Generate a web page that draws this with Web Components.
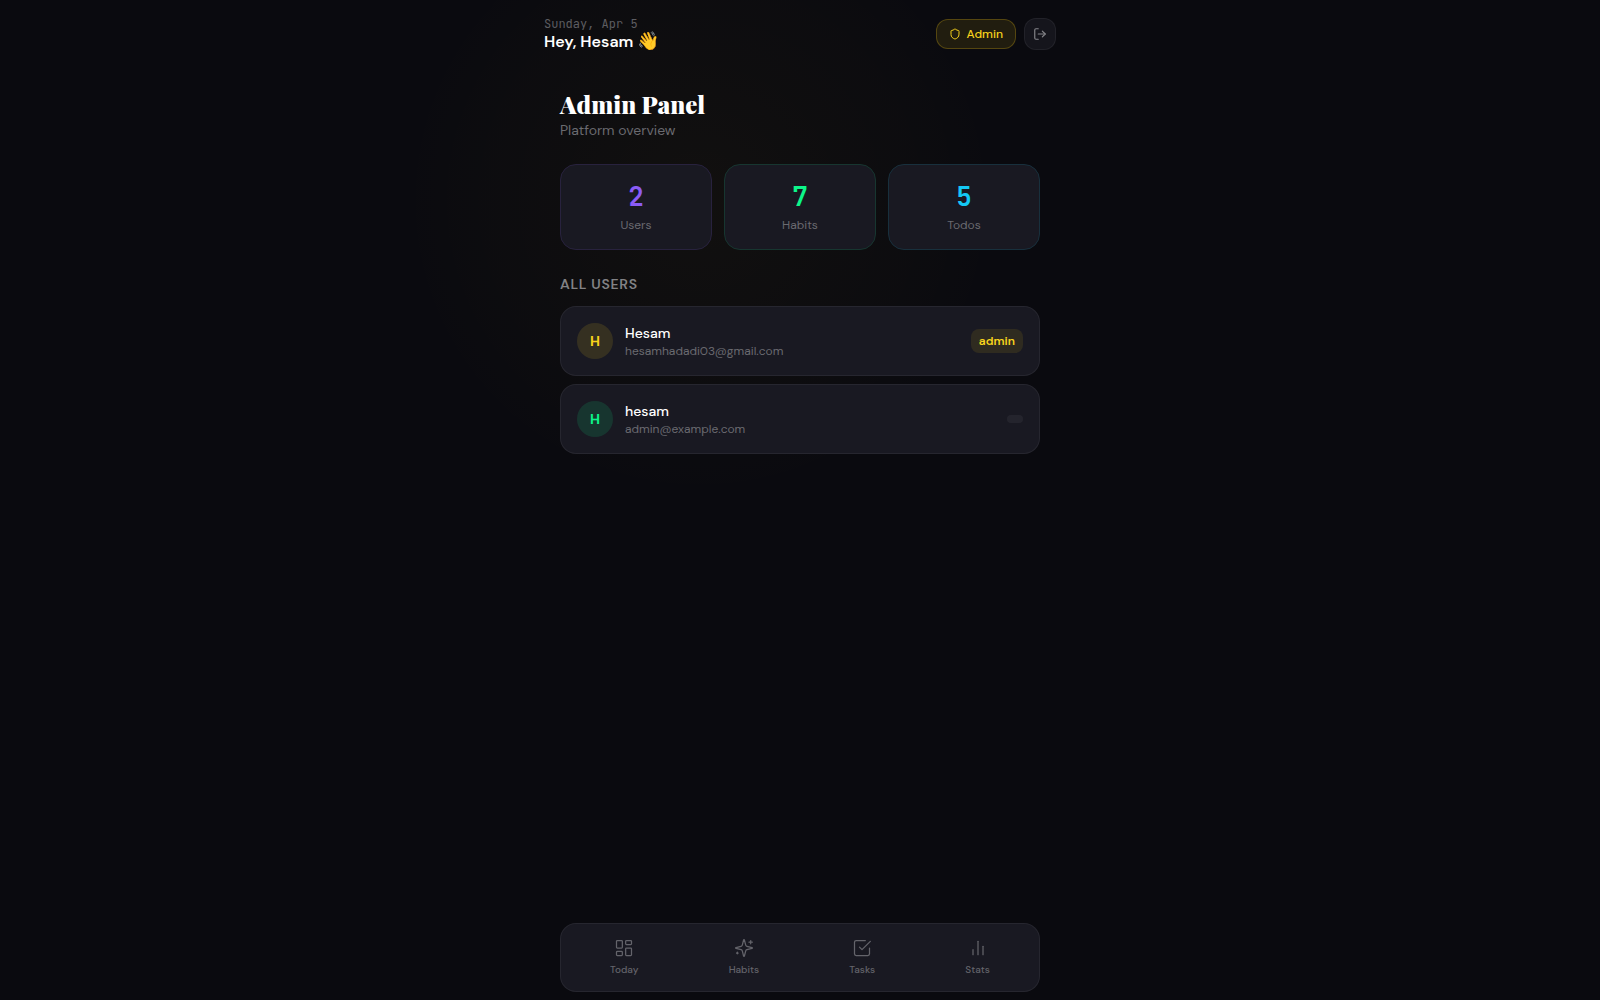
<!DOCTYPE html>
<html lang="en">
<head>
<meta charset="utf-8">
<meta name="viewport" content="width=device-width, initial-scale=1">
<title>Admin Panel</title>
<style>
  :root {
    --bg: #0a0a0f;
    --card: #191922;
    --line: rgba(255, 255, 255, 0.06);
    --text: #ffffff;
    --muted: #6a6a70;
    --gold: #f8d31c;
    --green: #0df68a;
    --purple: #8b5cf6;
    --cyan: #14c8f5;
    --sans: "DM Sans", Inter, "Open Sans", sans-serif;
    --mono: "JetBrains Mono", "DejaVu Sans Mono", monospace;
    --serif: "Playfair Display", "Liberation Serif", serif;
  }
  body {
    margin: 0;
    background: var(--bg);
    color: var(--text);
    font-family: var(--sans);
  }
</style>
</head>
<body>
<habit-app>
  <app-header slot="header" date="Sunday, Apr 5" name="Hesam"></app-header>

  <page-title heading="Admin Panel">Platform overview</page-title>

  <stat-grid>
    <stat-card value="2" tone="purple">Users</stat-card>
    <stat-card value="7" tone="green">Habits</stat-card>
    <stat-card value="5" tone="cyan">Todos</stat-card>
  </stat-grid>

  <user-list heading="All users">
    <user-card name="Hesam" email="hesamhadadi03@gmail.com" role="listitem" admin></user-card>
    <user-card name="hesam" email="admin@example.com" role="listitem"></user-card>
  </user-list>

  <tab-bar slot="footer">
    <tab-item icon="today">Today</tab-item>
    <tab-item icon="habits">Habits</tab-item>
    <tab-item icon="tasks">Tasks</tab-item>
    <tab-item icon="stats">Stats</tab-item>
  </tab-bar>
</habit-app>

<script>
const ICONS = {
  shield: '<path d="M20 13c0 5-3.5 7.5-7.66 8.95a1 1 0 0 1-.67-.01C7.5 20.5 4 18 4 13V6a1 1 0 0 1 1-1c2 0 4.5-1.2 6.24-2.72a1.17 1.17 0 0 1 1.52 0C14.51 3.81 17 5 19 5a1 1 0 0 1 1 1z"/>',
  logout: '<path d="M9 21H5a2 2 0 0 1-2-2V5a2 2 0 0 1 2-2h4"/><path d="m16 17 5-5-5-5"/><path d="M21 12H9"/>',
  today: '<rect x="3" y="3" width="7" height="9" rx="1"/><rect x="14" y="3" width="7" height="5" rx="1"/><rect x="14" y="12" width="7" height="9" rx="1"/><rect x="3" y="16" width="7" height="5" rx="1"/>',
  habits: '<path d="M9.937 15.5A2 2 0 0 0 8.5 14.063l-6.135-1.582a.5.5 0 0 1 0-.962L8.5 9.936A2 2 0 0 0 9.937 8.5l1.582-6.135a.5.5 0 0 1 .963 0L14.063 8.5A2 2 0 0 0 15.5 9.937l6.135 1.581a.5.5 0 0 1 0 .964L15.5 14.063a2 2 0 0 0-1.437 1.437l-1.582 6.135a.5.5 0 0 1-.963 0z"/><path d="M20 3v4"/><path d="M22 5h-4"/><path d="M4 17v2"/><path d="M5 18H3"/>',
  tasks: '<path d="m9 11 3 3L22 4"/><path d="M21 12v7a2 2 0 0 1-2 2H5a2 2 0 0 1-2-2V5a2 2 0 0 1 2-2h11"/>',
  stats: '<path d="M18 20V10"/><path d="M12 20V4"/><path d="M6 20v-6"/>',
};

function icon(name, size, stroke = 2) {
  return `<svg width="${size}" height="${size}" viewBox="0 0 24 24" fill="none" stroke="currentColor"
    stroke-width="${stroke}" stroke-linecap="round" stroke-linejoin="round" aria-hidden="true">${ICONS[name]}</svg>`;
}

// Shared base: puts css() and html() into an open shadow root
class BaseElement extends HTMLElement {
  connectedCallback() {
    if (this.shadowRoot) return;
    this.attachShadow({ mode: 'open' });
    this.shadowRoot.innerHTML = `<style>* { box-sizing: border-box; } ${this.css()}</style>${this.html()}`;
  }
}

class HabitApp extends BaseElement {
  css() {
    return `
      :host {
        display: flex;
        flex-direction: column;
        min-height: 100vh;
        position: relative;
        isolation: isolate;
        overflow: hidden;
      }
      .glow {
        position: absolute;
        z-index: -1;
        top: -100px;
        left: 25%;
        width: 600px;
        height: 600px;
        border-radius: 50%;
        background: radial-gradient(closest-side, rgba(250, 204, 21, 0.03), rgba(250, 204, 21, 0.02) 40%, rgba(250, 204, 21, 0.01) 70%, transparent);
      }
      main, .top, .bottom {
        width: 100%;
        max-width: 512px;
        margin: 0 auto;
      }
      main {
        flex: 1;
        display: flex;
        flex-direction: column;
        gap: 24px;
        padding: 20px 16px;
        box-sizing: border-box;
      }
      .bottom { padding: 0 16px 8px; }
    `;
  }

  html() {
    return `
      <div class="glow"></div>
      <div class="top"><slot name="header"></slot></div>
      <main><slot></slot></main>
      <div class="bottom"><slot name="footer"></slot></div>
    `;
  }
}
customElements.define('habit-app', HabitApp);

class AppHeader extends BaseElement {
  css() {
    return `
      :host { display: block; }
      header {
        display: flex;
        align-items: center;
        justify-content: space-between;
        padding: 16px 0;
      }
      p { margin: 0; }
      .date {
        font: 12px/16px var(--mono);
        color: #5d5d61;
      }
      .hello {
        font-size: 16px;
        line-height: 20px;
        font-weight: 600;
      }
      .wave {
        font-size: 18px;
        line-height: 16px;
      }
      .actions {
        display: flex;
        align-items: center;
        gap: 8px;
      }
      button {
        display: flex;
        align-items: center;
        justify-content: center;
        border-radius: 12px;
        font: 500 12px/16px var(--sans);
        cursor: pointer;
      }
      .admin {
        gap: 6px;
        padding: 6px 12px;
        color: var(--gold);
        background: rgba(250, 204, 21, 0.1);
        border: 1px solid rgba(250, 204, 21, 0.24);
      }
      .logout {
        width: 32px;
        height: 32px;
        padding: 0;
        color: #85858a;
        background: #15151c;
        border: 1px solid var(--line);
      }
    `;
  }

  html() {
    return `
      <header>
        <div>
          <p class="date">${this.getAttribute('date')}</p>
          <p class="hello">Hey, ${this.getAttribute('name')} <span class="wave">👋</span></p>
        </div>
        <div class="actions">
          <button class="admin" type="button">${icon('shield', 12)}Admin</button>
          <button class="logout" type="button" aria-label="Log out">${icon('logout', 14)}</button>
        </div>
      </header>
    `;
  }
}
customElements.define('app-header', AppHeader);

class PageTitle extends BaseElement {
  css() {
    return `
      :host { display: block; }
      h1 {
        margin: 0;
        font: 900 24px/32px var(--serif);
      }
      p {
        margin: 0;
        font-size: 14px;
        line-height: 20px;
        color: var(--muted);
      }
    `;
  }

  html() {
    return `<h1>${this.getAttribute('heading')}</h1><p><slot></slot></p>`;
  }
}
customElements.define('page-title', PageTitle);

class StatGrid extends BaseElement {
  css() {
    return `
      :host {
        display: grid;
        grid-template-columns: repeat(3, 1fr);
        gap: 12px;
      }
    `;
  }

  html() {
    return '<slot></slot>';
  }
}
customElements.define('stat-grid', StatGrid);

class StatCard extends BaseElement {
  css() {
    return `
      :host {
        --tone: var(--purple);
        display: block;
        padding: 16px;
        text-align: center;
        background: var(--card);
        border: 1px solid color-mix(in srgb, var(--tone) 13%, var(--card));
        border-radius: 16px;
      }
      :host([tone="green"]) { --tone: var(--green); }
      :host([tone="cyan"]) { --tone: var(--cyan); }
      .value {
        font: 700 26px/32px var(--mono);
        color: var(--tone);
      }
      .label {
        margin-top: 4px;
        font-size: 12px;
        line-height: 16px;
        color: var(--muted);
      }
    `;
  }

  html() {
    return `
      <div class="value">${this.getAttribute('value')}</div>
      <div class="label"><slot></slot></div>
    `;
  }
}
customElements.define('stat-card', StatCard);

class UserList extends BaseElement {
  css() {
    return `
      :host { display: block; }
      h2 {
        margin: 0 0 12px;
        font-size: 14px;
        line-height: 20px;
        font-weight: 600;
        letter-spacing: 0.05em;
        text-transform: uppercase;
        color: #828285;
      }
      .rows {
        display: flex;
        flex-direction: column;
        gap: 8px;
      }
    `;
  }

  html() {
    return `
      <h2>${this.getAttribute('heading')}</h2>
      <div class="rows" role="list"><slot></slot></div>
    `;
  }
}
customElements.define('user-list', UserList);

class UserCard extends BaseElement {
  css() {
    return `
      :host {
        --tone: var(--green);
        display: flex;
        align-items: center;
        gap: 12px;
        padding: 16px;
        background: var(--card);
        border: 1px solid var(--line);
        border-radius: 16px;
      }
      :host([admin]) { --tone: var(--gold); }
      .avatar {
        display: grid;
        place-items: center;
        width: 36px;
        height: 36px;
        border-radius: 50%;
        font-size: 14px;
        font-weight: 700;
        color: var(--tone);
        background: color-mix(in srgb, var(--tone) 13%, transparent);
      }
      .who {
        flex: 1;
        min-width: 0;
      }
      .name {
        font-size: 14px;
        line-height: 20px;
        font-weight: 500;
      }
      .email {
        font-size: 12px;
        line-height: 16px;
        color: var(--muted);
      }
      .badge {
        padding: 4px 8px;
        border-radius: 8px;
        font-size: 12px;
        line-height: 16px;
        font-weight: 600;
        background: rgba(255, 255, 255, 0.05);
      }
      :host([admin]) .badge {
        color: var(--gold);
        background: rgba(250, 204, 21, 0.1);
      }
    `;
  }

  html() {
    const name = this.getAttribute('name');
    return `
      <div class="avatar">${name[0].toUpperCase()}</div>
      <div class="who">
        <div class="name">${name}</div>
        <div class="email">${this.getAttribute('email')}</div>
      </div>
      <span class="badge">${this.hasAttribute('admin') ? 'admin' : ''}</span>
    `;
  }
}
customElements.define('user-card', UserCard);

class TabBar extends BaseElement {
  css() {
    return `
      :host { display: block; }
      nav {
        display: flex;
        justify-content: space-around;
        padding: 6px 4px;
        background: var(--card);
        border: 1px solid var(--line);
        border-radius: 16px;
      }
    `;
  }

  html() {
    return '<nav aria-label="Main"><slot></slot></nav>';
  }
}
customElements.define('tab-bar', TabBar);

class TabItem extends BaseElement {
  css() {
    return `
      :host { display: block; }
      a {
        display: flex;
        flex-direction: column;
        align-items: center;
        gap: 4px;
        padding: 8px 16px;
        font-size: 10px;
        line-height: 15px;
        font-weight: 500;
        color: #64646b;
        text-decoration: none;
      }
    `;
  }

  html() {
    const name = this.getAttribute('icon');
    return `<a href="#${name}">${icon(name, 20, 1.5)}<span><slot></slot></span></a>`;
  }
}
customElements.define('tab-item', TabItem);
</script>
</body>
</html>
